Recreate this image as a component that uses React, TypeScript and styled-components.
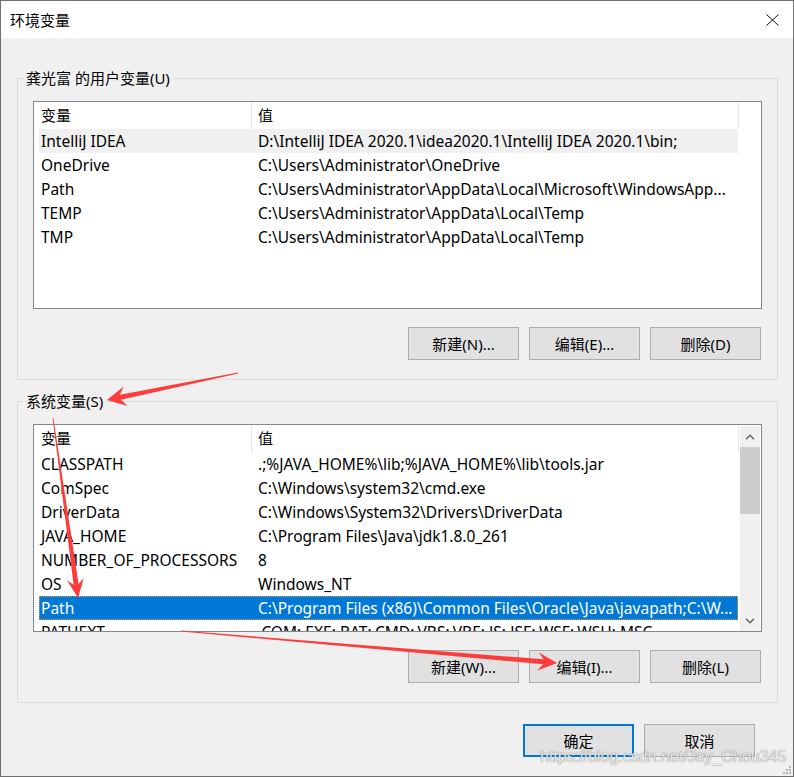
import React from 'react';
import styled, { createGlobalStyle, css } from 'styled-components';

const GlobalStyle = createGlobalStyle`
  html, body { margin: 0; padding: 0; background: #f0f0f0; }
  body {
    font-family: "Segoe UI", "Noto Sans", "Noto Sans CJK SC", sans-serif;
    -webkit-font-smoothing: antialiased;
  }
  * { box-sizing: border-box; }
`;

const Window = styled.div`
  position: relative;
  width: 794px;
  height: 777px;
  border: 1px solid #707070;
  background: #f0f0f0;
  display: flex;
  flex-direction: column;
  font-size: 15px;
  color: #000;
  overflow: hidden;
`;

const TitleBar = styled.div`
  height: 37px;
  flex: none;
  background: #fff;
  display: flex;
  align-items: center;
  justify-content: space-between;
  padding: 0 14px 0 9px;
`;

const Title = styled.span`
  font-size: 15px;
  line-height: 20px;
`;

const CloseButton = styled.span`
  display: flex;
  width: 13px;
  height: 12px;
`;

const Body = styled.div`
  flex: 1;
  display: flex;
  flex-direction: column;
  padding: 30px 15px 0 16px;
`;

const Group = styled.fieldset<{ $gap?: number }>`
  margin: ${(p) => p.$gap ?? 0}px 0 0 0;
  padding: 0 15px 19px 15px;
  border: 1px solid #dcdcdc;
  min-width: 0;
  display: flex;
  flex-direction: column;
`;

const Legend = styled.legend`
  padding: 0 3px;
  margin-left: -10px;
  font-size: 15px;
  line-height: 20px;
`;

const ListBox = styled.div`
  margin-top: 13px;
  height: 208px;
  border: 1px solid #828790;
  background: #fff;
  display: flex;
  overflow: hidden;
`;

const ListContent = styled.div`
  flex: 1;
  min-width: 0;
  display: flex;
  flex-direction: column;
  overflow: hidden;
  font-size: 15.5px;
`;

const HeaderRow = styled.div`
  flex: none;
  height: 27px;
  display: grid;
  grid-template-columns: 217px 488px;
  line-height: 26px;
  font-size: 15px;
`;

const HeaderCell = styled.div<{ $divider?: boolean }>`
  padding-left: ${(p) => (p.$divider ? 6 : 7)}px;
  ${(p) =>
    p.$divider &&
    css`
      border-left: 1px solid #e5e5e5;
      border-right: 1px solid #e5e5e5;
    `}
`;

type RowState = 'none' | 'hover' | 'selected';

const Row = styled.div<{ $state: RowState }>`
  flex: none;
  margin-left: 5px;
  width: 699px;
  height: 24px;
  display: grid;
  grid-template-columns: 217px 482px;
  line-height: 24px;
  white-space: nowrap;
  ${(p) =>
    p.$state === 'hover' &&
    css`
      background: #f0f0f0;
    `}
  ${(p) =>
    p.$state === 'selected' &&
    css`
      background: #0078d7;
      color: #fff;
      outline: 1px dotted #e09a3a;
      outline-offset: -1px;
    `}
`;

const Cell = styled.div`
  padding-left: 2px;
  overflow: hidden;
`;

const ScrollBar = styled.div`
  flex: none;
  width: 20px;
  margin: 1px 1px 0 0;
  background: #f0f0f0;
  display: flex;
  flex-direction: column;
`;

const ScrollArrow = styled.div`
  height: 21px;
  flex: none;
  display: flex;
  align-items: center;
  justify-content: center;
`;

const ScrollTrack = styled.div`
  flex: 1;
  display: flex;
  flex-direction: column;
`;

const ScrollThumb = styled.div`
  height: 67px;
  background: #cdcdcd;
`;

const ButtonRow = styled.div<{ $gapTop: number; $padRight: number }>`
  margin-top: ${(p) => p.$gapTop}px;
  padding-right: ${(p) => p.$padRight}px;
  display: flex;
  justify-content: flex-end;
  gap: 10px;
`;

const Button = styled.button<{ $default?: boolean }>`
  width: 111px;
  height: 33px;
  padding: 0;
  margin: 0;
  font-family: inherit;
  font-size: 15px;
  color: #000;
  background: #e1e1e1;
  border: 1px solid #adadad;
  ${(p) =>
    p.$default &&
    css`
      border: 2px solid #0078d7;
    `}
`;

const Watermark = styled.div`
  position: absolute;
  left: 539px;
  top: 747px;
  font-family: "Liberation Sans", Arial, sans-serif;
  font-size: 16px;
  color: rgba(255, 255, 255, 0.85);
  text-shadow: 0 0 1px rgba(90, 90, 90, 0.7), 0 0 1px rgba(90, 90, 90, 0.5);
  pointer-events: none;
  white-space: nowrap;
`;

const Grip = styled.svg`
  position: absolute;
  right: 1px;
  bottom: 1px;
`;

const Overlay = styled.svg`
  position: absolute;
  left: -1px;
  top: -1px;
  pointer-events: none;
`;

type Item = { name: string; value: string; state?: RowState };

const userVars: Item[] = [
  { name: 'IntelliJ IDEA', value: 'D:\\IntelliJ IDEA 2020.1\\idea2020.1\\IntelliJ IDEA 2020.1\\bin;', state: 'hover' },
  { name: 'OneDrive', value: 'C:\\Users\\Administrator\\OneDrive' },
  { name: 'Path', value: 'C:\\Users\\Administrator\\AppData\\Local\\Microsoft\\WindowsApp...' },
  { name: 'TEMP', value: 'C:\\Users\\Administrator\\AppData\\Local\\Temp' },
  { name: 'TMP', value: 'C:\\Users\\Administrator\\AppData\\Local\\Temp' },
];

const sysVars: Item[] = [
  { name: 'CLASSPATH', value: '.;%JAVA_HOME%\\lib;%JAVA_HOME%\\lib\\tools.jar' },
  { name: 'ComSpec', value: 'C:\\Windows\\system32\\cmd.exe' },
  { name: 'DriverData', value: 'C:\\Windows\\System32\\Drivers\\DriverData' },
  { name: 'JAVA_HOME', value: 'C:\\Program Files\\Java\\jdk1.8.0_261' },
  { name: 'NUMBER_OF_PROCESSORS', value: '8' },
  { name: 'OS', value: 'Windows_NT' },
  { name: 'Path', value: 'C:\\Program Files (x86)\\Common Files\\Oracle\\Java\\javapath;C:\\W...', state: 'selected' },
  { name: 'PATHEXT', value: '.COM;.EXE;.BAT;.CMD;.VBS;.VBE;.JS;.JSE;.WSF;.WSH;.MSC' },
];

function ListRows({ items }: { items: Item[] }) {
  return (
    <>
      <HeaderRow>
        <HeaderCell>变量</HeaderCell>
        <HeaderCell $divider>值</HeaderCell>
      </HeaderRow>
      {items.map((it) => (
        <Row key={it.name + it.value} $state={it.state ?? 'none'}>
          <Cell>{it.name}</Cell>
          <Cell>{it.value}</Cell>
        </Row>
      ))}
    </>
  );
}

const Chevron = ({ up }: { up?: boolean }) => (
  <svg width="10" height="6" viewBox="0 0 10 6">
    <path
      d={up ? 'M1 5.2 L5 1.2 L9 5.2' : 'M1 0.8 L5 4.8 L9 0.8'}
      fill="none"
      stroke="#606060"
      strokeWidth="1.4"
    />
  </svg>
);

function arrowPoints(
  tx: number,
  ty: number,
  hx: number,
  hy: number,
  tailW: number,
  shaftW: number,
  headLen: number,
  headW: number
) {
  const dx = hx - tx;
  const dy = hy - ty;
  const L = Math.hypot(dx, dy);
  const ux = dx / L;
  const uy = dy / L;
  const nx = -uy;
  const ny = ux;
  const bx = hx - ux * headLen;
  const by = hy - uy * headLen;
  const sx = hx - ux * headLen * 0.72;
  const sy = hy - uy * headLen * 0.72;
  const pts = [
    [tx + (nx * tailW) / 2, ty + (ny * tailW) / 2],
    [sx + (nx * shaftW) / 2, sy + (ny * shaftW) / 2],
    [bx + nx * headW, by + ny * headW],
    [hx, hy],
    [bx - nx * headW, by - ny * headW],
    [sx - (nx * shaftW) / 2, sy - (ny * shaftW) / 2],
    [tx - (nx * tailW) / 2, ty - (ny * tailW) / 2],
  ];
  return pts.map((p) => p.map((v) => v.toFixed(1)).join(',')).join(' ');
}

export default function App() {
  return (
    <>
      <GlobalStyle />
      <Window>
        <TitleBar>
          <Title>环境变量</Title>
          <CloseButton>
            <svg width="13" height="12" viewBox="0 0 13 12">
              <path d="M0.5 0.5 L12.5 11.5 M12.5 0.5 L0.5 11.5" stroke="#111" strokeWidth="1" fill="none" />
            </svg>
          </CloseButton>
        </TitleBar>
        <Body>
          <Group>
            <Legend>龚光富 的用户变量(U)</Legend>
            <ListBox>
              <ListContent>
                <ListRows items={userVars} />
              </ListContent>
            </ListBox>
            <ButtonRow $gapTop={18} $padRight={1}>
              <Button>新建(N)...</Button>
              <Button>编辑(E)...</Button>
              <Button>删除(D)</Button>
            </ButtonRow>
          </Group>
          <Group $gap={11}>
            <Legend>系统变量(S)</Legend>
            <ListBox>
              <ListContent>
                <ListRows items={sysVars} />
              </ListContent>
              <ScrollBar>
                <ScrollArrow>
                  <Chevron up />
                </ScrollArrow>
                <ScrollTrack>
                  <ScrollThumb />
                </ScrollTrack>
                <ScrollArrow>
                  <Chevron />
                </ScrollArrow>
              </ScrollBar>
            </ListBox>
            <ButtonRow $gapTop={18} $padRight={1}>
              <Button>新建(W)...</Button>
              <Button>编辑(I)...</Button>
              <Button>删除(L)</Button>
            </ButtonRow>
          </Group>
          <ButtonRow $gapTop={21} $padRight={23}>
            <Button $default>确定</Button>
            <Button>取消</Button>
          </ButtonRow>
        </Body>
        <Watermark>https://blog.csdn.net/Jay_Chou345</Watermark>
        <Grip width="10" height="10" viewBox="0 0 10 10">
          <g fill="#b8b8b8">
            <rect x="7" y="1" width="2" height="2" />
            <rect x="4" y="4" width="2" height="2" />
            <rect x="7" y="4" width="2" height="2" />
            <rect x="1" y="7" width="2" height="2" />
            <rect x="4" y="7" width="2" height="2" />
            <rect x="7" y="7" width="2" height="2" />
          </g>
        </Grip>
        <Overlay width="794" height="777" viewBox="0 0 794 777">
          <g fill="#fd3c3c">
            <polygon points={arrowPoints(238, 373, 107, 400, 0.8, 5, 19, 10)} />
            <polygon points={arrowPoints(53, 418, 78, 598, 0.8, 5, 19, 8.5)} />
            <polygon points={arrowPoints(181, 631, 557, 663, 0.8, 5, 19, 9)} />
          </g>
        </Overlay>
      </Window>
    </>
  );
}
